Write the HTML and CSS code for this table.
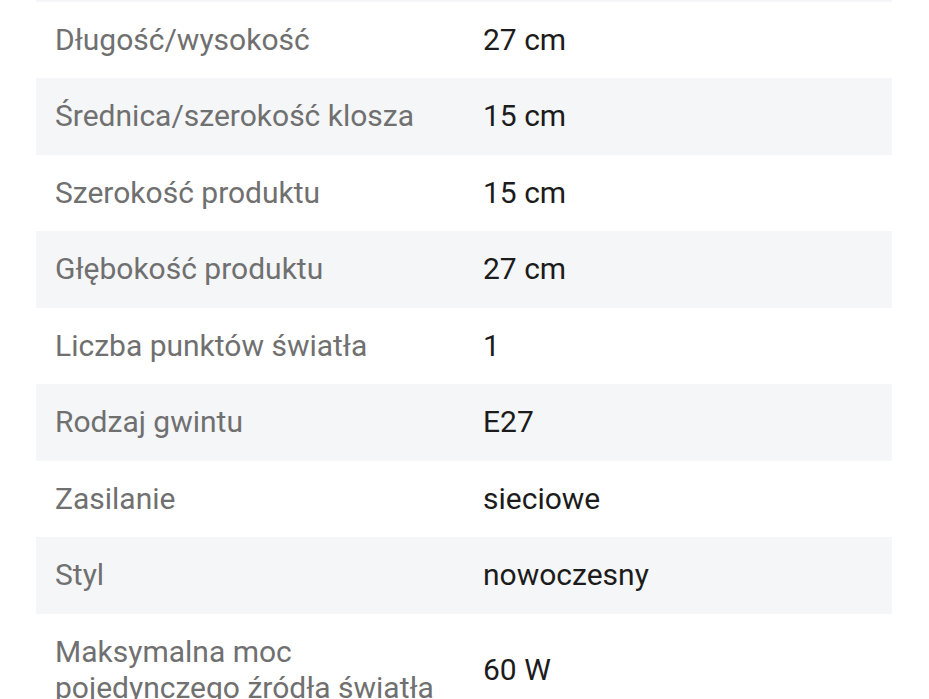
FILE: index.html
```html
<!DOCTYPE html>
<html lang="pl">
<head>
<meta charset="utf-8">
<title>Parametry</title>
<link rel="stylesheet" href="styles.css">
</head>
<body>
<div class="specs">
  <div class="row row-cut"></div>
  <div class="row"><div class="label">Długość/wysokość</div><div class="value">27 cm</div></div>
  <div class="row"><div class="label">Średnica/szerokość klosza</div><div class="value">15 cm</div></div>
  <div class="row"><div class="label">Szerokość produktu</div><div class="value">15 cm</div></div>
  <div class="row"><div class="label">Głębokość produktu</div><div class="value">27 cm</div></div>
  <div class="row"><div class="label">Liczba punktów światła</div><div class="value">1</div></div>
  <div class="row"><div class="label">Rodzaj gwintu</div><div class="value">E27</div></div>
  <div class="row"><div class="label">Zasilanie</div><div class="value">sieciowe</div></div>
  <div class="row"><div class="label">Styl</div><div class="value">nowoczesny</div></div>
  <div class="row"><div class="label">Maksymalna moc pojedynczego źródła światła</div><div class="value">60 W</div></div>
</div>
</body>
</html>
```

FILE: styles.css
```css
html, body {
  margin: 0;
  padding: 0;
  background: #ffffff;
}
body {
  font-family: Roboto, "Noto Sans", sans-serif;
  font-size: 30px;
}
.specs {
  margin: -75px 37px 0 36px;
}
.row {
  display: grid;
  grid-template-columns: 447px 1fr;
  align-items: center;
  padding: 20px 0;
  line-height: 36.5px;
  min-height: 36.5px;
}
.row:nth-child(odd) {
  background: #f5f6f8;
}
.label {
  padding: 0 24px 0 19px;
  color: #707070;
}
.value {
  color: #1c1c1c;
}
```
